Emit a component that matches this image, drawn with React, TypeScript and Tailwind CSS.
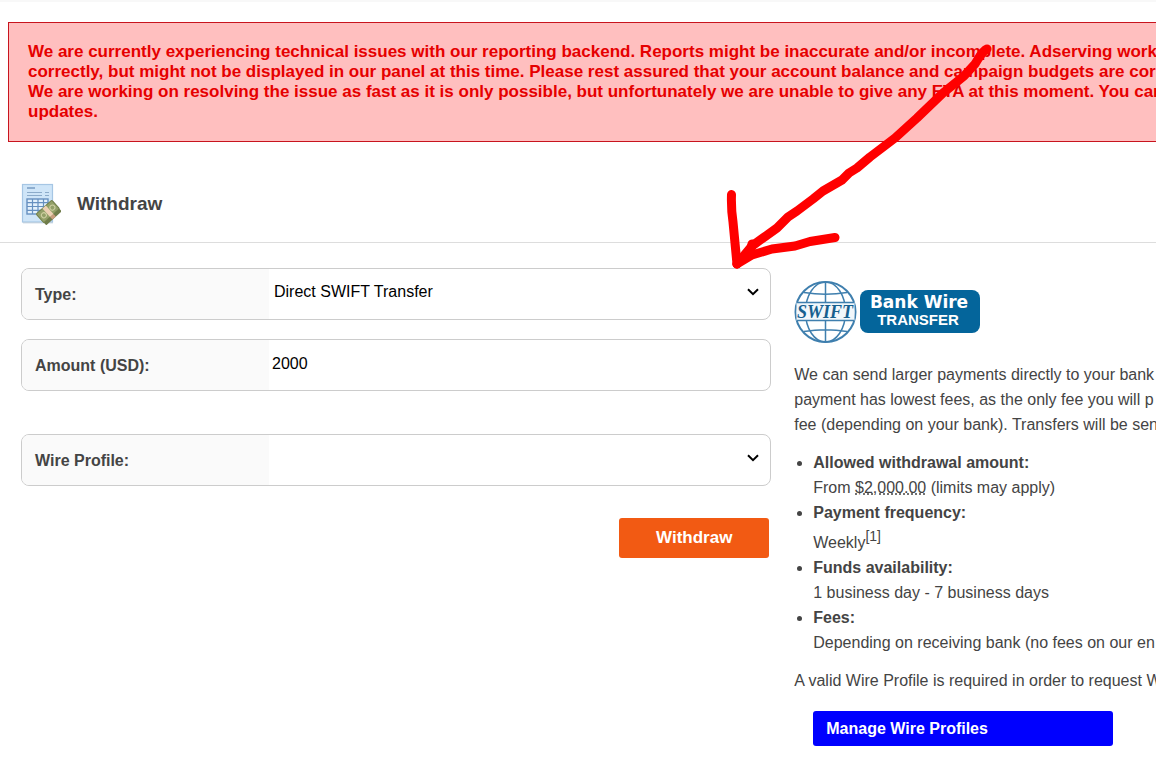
import { useState, type FormEvent, type ReactNode } from "react";

const wireProfiles: string[] = [];

function WithdrawIcon() {
    return (
        <svg width="40" height="42" viewBox="0 0 40 42" aria-hidden="true">
            <rect x="1.500" y="1.500" width="30" height="37.500" fill="#cfe5f8" stroke="#a6c6e4" strokeWidth="1.200" />
            <path d="M2 39.800h30" stroke="#b9cadb" />
            <path d="M6 5h8" stroke="#7ea0c6" strokeWidth="1.600" />
            <path d="M6 9.500h15M24 9.500h4M6 12.500h15M24 12.500h4" stroke="#8cabca" strokeWidth="1.200" />
            <rect x="6" y="16" width="21" height="15" fill="#e4f1fc" stroke="#6690c0" strokeWidth="1.400" />
            <path d="M6 19.700h21M6 23.500h21M6 27.300h21M11.500 16v15M17 16v15M22.500 16v15" stroke="#6690c0" strokeWidth="1.200" />
            <g transform="rotate(-42 28 29)">
                <rect x="17" y="23" width="21" height="14" rx="1" fill="#6f7c4a" />
                <rect x="17" y="22" width="21" height="11.500" rx="1" fill="#93a068" stroke="#73804a" />
                <circle cx="22" cy="28" r="2.500" fill="none" stroke="#cfd0a2" />
                <circle cx="33.500" cy="28" r="2.500" fill="none" stroke="#cfd0a2" />
                <rect x="25.500" y="22" width="4.500" height="11.500" fill="#ecd0b4" />
                <rect x="25.500" y="33.500" width="4.500" height="3.500" fill="#c99d7e" />
            </g>
        </svg>
    );
}

function SwiftLogo() {
    return (
        <svg width="186" height="62" viewBox="0 0 186 62" role="img" aria-label="SWIFT Bank Wire Transfer">
            {/* globe */}
            <g fill="none" stroke="#3f7fae" strokeWidth="1.500">
                <circle cx="31.500" cy="31" r="30" fill="#fff" strokeWidth="2" />
                <ellipse cx="31.500" cy="31" rx="20" ry="30" />
                <path d="M31.500 1v60M10 11.500Q31.500 15 53 11.500M10 50.500Q31.500 47 53 50.500" />
            </g>
            <path d="M2.500 21.500h58v18h-58z" fill="#f1f7fb" />
            <path d="M3 21.500h57M3 39.500h57" stroke="#3f7fae" strokeWidth="1.500" />
            <text x="31" y="36.500" textAnchor="middle" className="fill-[#17608f] font-['Liberation_Serif',serif] text-[18px] font-bold italic">SWIFT</text>
            {/* badge */}
            <rect x="66" y="9" width="120" height="43" rx="8" fill="#04659b" />
            <text x="125" y="27" textAnchor="middle" className="fill-white font-['DejaVu_Sans',sans-serif] text-[17px] font-bold">Bank Wire</text>
            <text x="124" y="44" textAnchor="middle" className="fill-white font-['Liberation_Sans',sans-serif] text-[15px] font-bold">TRANSFER</text>
        </svg>
    );
}

function Chevron() {
    return (
        <svg className="pointer-events-none absolute top-[19px] right-[11px]" width="12" height="8" viewBox="0 0 12 8" aria-hidden="true">
            <path d="M1 1.200 6 6.200 11 1.200" fill="none" stroke="#000" strokeWidth="2" />
        </svg>
    );
}

// hand drawn arrow on top of the page
function Arrow() {
    return (
        <svg className="pointer-events-none absolute top-10 left-[720px]" width="280" height="232" viewBox="720 40 280 232" fill="none" stroke="#ff0000" strokeWidth="9" strokeLinecap="round" strokeLinejoin="round" aria-hidden="true">
            <path d="M987 49C982 51 979 58 975 64L964 76 943 93 917 118 895 138 870 157 857 168 849 173 842 180 823 191 813 199 797 211 788 217 777 228 763 238 752 246 737 264" />
            <path d="M731.500 194.500Q731 209 733 222L735 243 737 264" />
            <path d="M835 237.500 810 241.500 795 246 772 249 752 255 737 264" />
            <path d="M752 244 750 254" />
        </svg>
    );
}

function FormRow({ id, label, children }: { id: string, label: string, children: ReactNode }) {
    return (
        <div className="flex h-[52px] overflow-hidden rounded-lg border border-[#cccccc] bg-white">
            <label htmlFor={id} className="flex w-[247px] shrink-0 items-center bg-[#fafafa] px-[13px] pt-0.5 font-bold">{label}</label>
            <div className="relative flex-1">{children}</div>
        </div>
    );
}

export default function App() {
    const [type, setType] = useState("swift");
    const [amount, setAmount] = useState("2000");
    const [profile, setProfile] = useState("");

    function handleSubmit(e: FormEvent) {
        e.preventDefault();
    }

    return (
        <div className="relative min-h-screen overflow-hidden bg-white pb-3 font-['Liberation_Sans',Arial,sans-serif] text-base text-[#444444]">
            <div className="h-0.5 bg-[#f8f8f8]" />

            {/* Outage notice, runs past the right edge */}
            <div className="mt-5 ml-2 border border-r-0 border-[#c8141e] bg-[#ffbfbf] px-[19px] py-[19px] text-[17px] leading-5 font-bold whitespace-nowrap text-[#e60000]">
                <p>We are currently experiencing technical issues with our reporting backend. Reports might be inaccurate and/or incomplete. Adserving works c</p>
                <p>correctly, but might not be displayed in our panel at this time. Please rest assured that your account balance and campaign budgets are correc</p>
                <p>We are working on resolving the issue as fast as it is only possible, but unfortunately we are unable to give any ETA at this moment. You can m</p>
                <p>updates.</p>
            </div>

            <header className="mt-[41px] flex items-center gap-4 border-b border-[#dddddd] pb-[17px] pl-[21px]">
                <WithdrawIcon />
                <h1 className="text-[19px] font-bold">Withdraw</h1>
            </header>

            <main className="flex gap-[23px] pt-[25px] pl-[21px]">
                <form onSubmit={handleSubmit} className="w-[66.1%] shrink-0">
                    <FormRow id="type" label="Type:">
                        <select id="type" value={type} onChange={(e) => setType(e.target.value)}
                            className="h-[46px] w-full appearance-none bg-transparent px-[5px] text-black outline-none">
                            <option value="swift">Direct SWIFT Transfer</option>
                        </select>
                        <Chevron />
                    </FormRow>
                    <div className="mt-[19px] mb-[43px]">
                        <FormRow id="amount" label="Amount (USD):">
                            <input id="amount" type="text" value={amount} onChange={(e) => setAmount(e.target.value)}
                                className="h-12 w-full px-[3px] text-black outline-none" />
                        </FormRow>
                    </div>
                    <FormRow id="profile" label="Wire Profile:">
                        <select id="profile" value={profile} onChange={(e) => setProfile(e.target.value)}
                            className="h-[46px] w-full appearance-none bg-transparent px-[5px] text-black outline-none">
                            <option value=""></option>
                            {wireProfiles.map((name) => <option key={name} value={name}>{name}</option>)}
                        </select>
                        <Chevron />
                    </FormRow>
                    <div className="mt-8 flex justify-end pr-0.5">
                        <button type="submit" className="h-10 w-[150px] rounded-[3px] bg-[#f25a13] text-[17px] font-bold text-white hover:cursor-pointer">Withdraw</button>
                    </div>
                </form>

                <section className="min-w-0 flex-1 pt-[13px] leading-[25px] whitespace-nowrap">
                    <SwiftLogo />
                    <div className="mt-[19px]">
                        <p>We can send larger payments directly to your bank</p>
                        <p>payment has lowest fees, as the only fee you will p</p>
                        <p>fee (depending on your bank). Transfers will be sen</p>
                    </div>
                    <ul className="my-[13px] list-disc pl-[19px]">
                        <li>
                            <strong>Allowed withdrawal amount:</strong>
                            <p>From <abbr title="2000 USD" className="underline decoration-dotted">$2,000.00</abbr> (limits may apply)</p>
                        </li>
                        <li>
                            <strong>Payment frequency:</strong>
                            <p className="pt-[5px]">Weekly<sup className="text-sm leading-none">[1]</sup></p>
                        </li>
                        <li>
                            <strong>Funds availability:</strong>
                            <p>1 business day - 7 business days</p>
                        </li>
                        <li>
                            <strong>Fees:</strong>
                            <p>Depending on receiving bank (no fees on our en</p>
                        </li>
                    </ul>
                    <p>A valid Wire Profile is required in order to request W</p>
                    <a href="#profiles" className="mt-[18px] ml-[19px] flex h-[35px] w-[300px] items-center rounded-[3px] bg-[#0000ff] px-[13px] font-bold text-white">Manage Wire Profiles</a>
                </section>
            </main>

            <Arrow />
        </div>
    );
}
